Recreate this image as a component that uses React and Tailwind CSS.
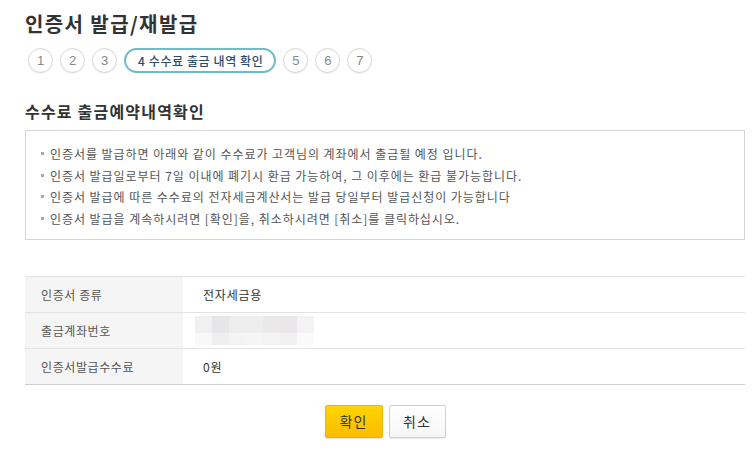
import React from "react";

const FONT = { fontFamily: "'Noto Sans CJK KR', 'Noto Sans', sans-serif" };

/* ── step indicator ── */
const STEPS = ["1", "2", "3", "4", "5", "6", "7"];

/* ── notice lines ── */
const NOTICES = [
  "인증서를 발급하면 아래와 같이 수수료가 고객님의 계좌에서 출금될 예정 입니다.",
  "인증서 발급일로부터 7일 이내에 폐기시 환급 가능하여, 그 이후에는 환급 불가능합니다.",
  "인증서 발급에 따른 수수료의 전자세금계산서는 발급 당일부터 발급신청이 가능합니다",
  "인증서 발급을 계속하시려면 [확인]을, 취소하시려면 [취소]를 클릭하십시오.",
];

/* ── pixelated account number ── */
const BLUR_TOP = ["#f0f0f0", "#e6e6e8", "#ededee", "#ededee", "#ebe8ea", "#e9e7e9", "#f3f3f3"];
const BLUR_BOTTOM = ["#f8f8f8", "#efeff0", "#f4f4f4", "#f5f5f5", "#f3f3f3", "#f1f1f1", "#fafafa"];

function BlurredAccount() {
  return (
    <div className="flex flex-col">
      <div className="flex">
        {BLUR_TOP.map((c, i) => (
          <div key={i} className="w-[17px] h-[17px]" style={{ background: c }} />
        ))}
      </div>
      <div className="flex">
        {BLUR_BOTTOM.map((c, i) => (
          <div key={i} className="w-[17px] h-[12px]" style={{ background: c }} />
        ))}
      </div>
    </div>
  );
}

export default function App() {
  const rows = [
    { label: "인증서 종류", value: "전자세금용" },
    { label: "출금계좌번호", value: null },
    { label: "인증서발급수수료", value: "0원" },
  ];

  return (
    <div className="w-[756px] h-[450px] bg-white pl-[25px] pr-[11px] pt-[10px] overflow-hidden" style={FONT}>
      {/* Title */}
      <h1 className="text-[20px] leading-[28px] font-bold text-[#333] tracking-[1.4px]">인증서 발급/재발급</h1>

      {/* Steps */}
      <div className="flex items-center gap-[7px] mt-[10px] pl-[3px]">
        {STEPS.map((s) =>
          s === "4" ? (
            <div
              key={s}
              className="h-[25px] pl-[12px] pr-[11px] rounded-full border-2 border-[#6dbccb] flex items-center text-[12px] text-[#2b4b6b] font-medium tracking-[0.6px]"
            >
              4 수수료 출금 내역 확인
            </div>
          ) : (
            <div
              key={s}
              className="w-[25px] h-[25px] rounded-full border border-[#d6d6d6] flex items-center justify-center text-[13px] text-[#888] shadow-[0_1px_1px_rgba(0,0,0,0.06)]"
              style={{ fontFamily: "'Liberation Sans', sans-serif" }}
            >
              {s}
            </div>
          )
        )}
      </div>

      {/* Section heading */}
      <h2 className="mt-[27px] text-[16px] leading-[22px] font-bold text-[#333] tracking-[1.2px]">수수료 출금예약내역확인</h2>

      {/* Notice box */}
      <div className="mt-[8px] border border-[#d5d5d5] pt-[12px] pb-[10px] pl-[15px]">
        {NOTICES.map((t) => (
          <div key={t} className="flex items-center text-[12px] leading-[21.5px] text-[#555] tracking-[0.95px]">
            <span className="w-[3px] h-[3px] bg-[#aaa] mr-[6px] shrink-0" />
            <span>{t}</span>
          </div>
        ))}
      </div>

      {/* Info table */}
      <div className="mt-[36px] border-b border-[#cfcfcf]">
        {rows.map((r) => (
          <div key={r.label} className="flex h-[36px] border-t border-[#e2e2e2]">
            <div className="w-[158px] bg-[#f5f5f5] pl-[16px] flex items-center text-[12px] text-[#555] tracking-[0.6px]">
              {r.label}
            </div>
            <div className="flex-1 pl-[20px] flex items-center text-[12px] text-[#333] tracking-[0.8px]">
              {r.value ?? (
                <div className="-ml-[8px]">
                  <BlurredAccount />
                </div>
              )}
            </div>
          </div>
        ))}
      </div>

      {/* Buttons */}
      <div className="mt-[20px] flex justify-center gap-[6px]">
        <button className="w-[58px] h-[33px] rounded-[2px] border border-[#f0b400] bg-gradient-to-b from-[#ffd400] to-[#fbbd00] text-[14px] text-[#333] tracking-[1px] shadow-[0_1px_1px_rgba(0,0,0,0.12)]">
          확인
        </button>
        <button className="w-[57px] h-[33px] rounded-[2px] border border-[#cfcfcf] bg-gradient-to-b from-white to-[#f6f6f6] text-[14px] text-[#333] tracking-[1px] shadow-[0_1px_1px_rgba(0,0,0,0.08)]">
          취소
        </button>
      </div>
    </div>
  );
}
